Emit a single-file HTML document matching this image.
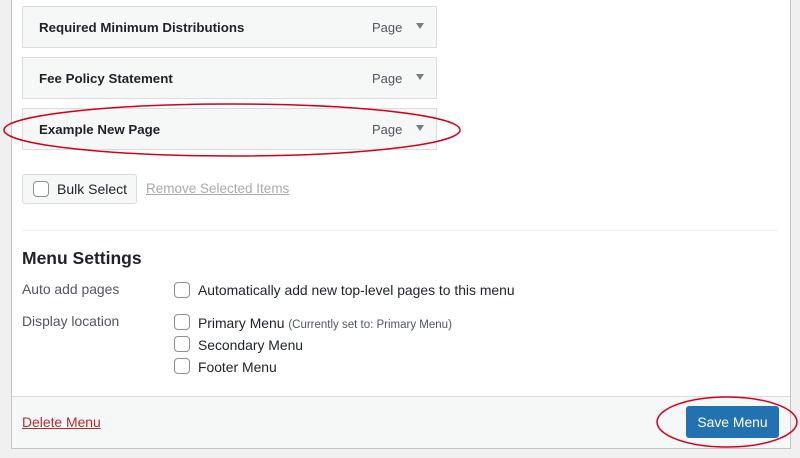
<!DOCTYPE html>
<html><head><style>
*{box-sizing:border-box;margin:0;padding:0}
body{width:800px;height:458px;background:#f0f0f1;font-family:"Liberation Sans",sans-serif;color:#1d2327;position:relative;overflow:hidden}
.panel{position:absolute;left:11px;top:-2px;width:780px;height:451px;background:#fff;border:1px solid #c3c4c7}
.foot{position:absolute;left:12px;top:396px;width:778px;height:52px;background:#f6f7f7;border-top:1px solid #dcdcde}
.item{position:absolute;left:22px;width:415px;height:42px;background:#f6f7f7;border:1px solid #dcdcde;font-size:13.3px;font-weight:bold}
.item .t{position:absolute;left:16px;top:13px}
.item .p{position:absolute;left:349px;top:13px;font-weight:normal;font-size:13px;color:#50575e}
.item .a{position:absolute;left:393px;top:16px;width:0;height:0;border-left:4px solid transparent;border-right:4px solid transparent;border-top:6px solid #787c82}
.cb{position:absolute;width:16px;height:16px;border:1px solid #8c8f94;border-radius:4px;background:#fff}
.tx{position:absolute;font-size:13.9px;white-space:nowrap}
</style></head><body>
<div class="panel"></div>
<div class="foot"></div>
<div class="item" style="top:6px"><span class="t">Required Minimum Distributions</span><span class="p">Page</span><span class="a"></span></div>
<div class="item" style="top:57px"><span class="t">Fee Policy Statement</span><span class="p">Page</span><span class="a"></span></div>
<div class="item" style="top:108px"><span class="t">Example New Page</span><span class="p">Page</span><span class="a"></span></div>
<div style="position:absolute;left:22px;top:174px;width:115px;height:30px;border:1px solid #dcdcde;border-radius:3px;background:#f6f7f7"></div>
<div class="cb" style="left:33px;top:181px"></div>
<div class="tx" style="left:57px;top:181px;font-size:14px">Bulk Select</div>
<div class="tx" style="left:146px;top:181px;color:#a7aaad;text-decoration:underline;font-size:13.5px">Remove Selected Items</div>
<div style="position:absolute;left:22px;top:230px;width:756px;height:1px;background:#f0f0f1"></div>
<div class="tx" style="left:22px;top:248px;font-size:17.5px;font-weight:bold">Menu Settings</div>
<div class="tx" style="left:22px;top:281px;color:#50575e">Auto add pages</div>
<div class="tx" style="left:22px;top:313px;color:#50575e">Display location</div>
<div class="cb" style="left:174px;top:282px"></div>
<div class="tx" style="left:198px;top:282px">Automatically add new top-level pages to this menu</div>
<div class="cb" style="left:174px;top:314px"></div>
<div class="tx" style="left:198px;top:315px">Primary Menu <span style="font-size:11.5px;color:#50575e">(Currently set to: Primary Menu)</span></div>
<div class="cb" style="left:174px;top:336px"></div>
<div class="tx" style="left:198px;top:337px">Secondary Menu</div>
<div class="cb" style="left:174px;top:358px"></div>
<div class="tx" style="left:198px;top:359px">Footer Menu</div>
<div class="tx" style="left:22px;top:414px;color:#b32d2e;text-decoration:underline">Delete Menu</div>
<div style="position:absolute;left:686px;top:406px;width:93px;height:32px;background:#2271b1;border-radius:3px;color:#fff;font-size:13.9px;text-align:center;line-height:33px">Save Menu</div>
<svg style="position:absolute;left:0;top:0" width="800" height="458">
<ellipse cx="232" cy="130" rx="228" ry="26" fill="none" stroke="#d0021b" stroke-width="1.5"/>
<ellipse cx="727" cy="422" rx="70" ry="25" fill="none" stroke="#d0021b" stroke-width="1.5"/>
</svg>
</body></html>
